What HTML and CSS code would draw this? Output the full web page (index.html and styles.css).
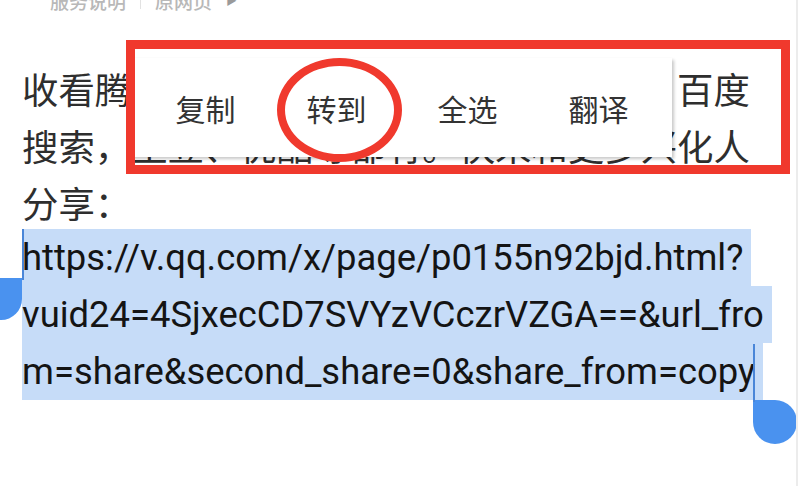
FILE: index.html
```html
<!DOCTYPE html>
<html lang="zh-CN">
<head>
    <meta charset="UTF-8">
    <meta name="viewport" content="width=device-width, initial-scale=1.0">
    <title>分享</title>
    <link rel="stylesheet" href="styles.css">
</head>
<body>
    <div class="page">
        <!-- Header links, scrolled mostly out of view -->
        <div class="top-links">
            <span>服务说明</span>
            <span class="sep"></span>
            <span>原网页</span>
            <span class="arrow">&#9654;</span>
        </div>

        <div class="article">
            <div class="line">收看腾讯视频、爱奇艺等，可以在腾讯、百度</div>
            <div class="line">搜索，土豆、优酷等都有。快来和更多兴化人</div>
            <div class="line">分享：</div>
            <div class="selection">
                <span class="sel-line">https://v.qq.com/x/page/p0155n92bjd.html?</span>
                <span class="sel-line">vuid24=4SjxecCD7SVYzVCczrVZGA==&amp;url_fro</span>
                <span class="sel-line">m=share&amp;second_share=0&amp;share_from=copy</span>
                <span class="handle handle-start"></span>
                <span class="handle handle-end"></span>
            </div>
        </div>

        <!-- Text selection menu -->
        <div class="sel-menu">
            <span class="sel-item">复制</span>
            <span class="sel-item">转到</span>
            <span class="sel-item">全选</span>
            <span class="sel-item">翻译</span>
        </div>

        <!-- Red annotation marks -->
        <div class="mark-box"></div>
        <div class="mark-ring"></div>
    </div>
</body>
</html>
```

FILE: styles.css
```css
* {
    box-sizing: border-box;
}

body {
    margin: 0;
    background-color: #fff;
    font-family: Roboto, "Noto Sans CJK SC", sans-serif;
    overflow: hidden;
}

.page {
    position: relative;
    width: 800px;
    height: 486px;
    overflow: hidden;
}

/* faint scrollbar track on the right */
.page::after {
    content: "";
    position: absolute;
    top: 0;
    right: 2px;
    width: 2px;
    height: 100%;
    background-color: #ececec;
}

.top-links {
    display: flex;
    align-items: center;
    gap: 14px;
    height: 24px;
    margin-top: -12px;
    padding-left: 50px;
    font-size: 19px;
    font-weight: 500;
    color: #b8b8b8;
}

.top-links .sep {
    width: 1px;
    height: 18px;
    background-color: #e2e2e2;
}

.top-links .arrow {
    font-size: 11px;
    color: #9a9a9a;
}

.article {
    padding-top: 46px;
    padding-left: 22px;
    font-size: 36.4px;
    line-height: 57px;
    color: #2e2e2e;
    white-space: nowrap;
}

/* chinese lines sit a little lower in their line box */
.line {
    height: 57px;
    padding-top: 5px;
}

.selection {
    position: relative;
    color: #141414;
}

.sel-line {
    display: block;
    width: fit-content;
    height: 57px;
    padding-right: 8px;
    background-color: #c6dcf8;
}

.handle {
    position: absolute;
    width: 42px;
    height: 42px;
    background-color: #4a92ef;
}

/* start cursor + drop */
.handle-start {
    left: -42px;
    top: 49px;
    border-radius: 50% 0 50% 50%;
}

.handle-start::before {
    content: "";
    position: absolute;
    right: -2px;
    bottom: 40px;
    width: 2px;
    height: 51px;
    background-color: #4a86d8;
}

/* end cursor + drop */
.handle-end {
    left: 731px;
    top: 171px;
    width: 44px;
    height: 44px;
    border-radius: 0 50% 50% 50%;
}

.handle-end::before {
    content: "";
    position: absolute;
    left: 0;
    bottom: 42px;
    width: 2px;
    height: 58px;
    background-color: #4a86d8;
}

.sel-menu {
    position: absolute;
    left: 128px;
    top: 58px;
    width: 544px;
    height: 99px;
    display: flex;
    align-items: center;
    padding: 0 8px 0 12px;
    background-color: #fff;
    box-shadow: 2px 2px 3px rgba(0, 0, 0, 0.22);
}

.sel-item {
    width: 131px;
    text-align: center;
    font-size: 30px;
    color: #333;
}

.mark-box {
    position: absolute;
    left: 126px;
    top: 40px;
    width: 664px;
    height: 134px;
    border: 9px solid #f0392d;
}

.mark-ring {
    position: absolute;
    left: 277px;
    top: 58px;
    width: 125px;
    height: 104px;
    border: 8px solid #f0392d;
    border-radius: 50%;
}
```
